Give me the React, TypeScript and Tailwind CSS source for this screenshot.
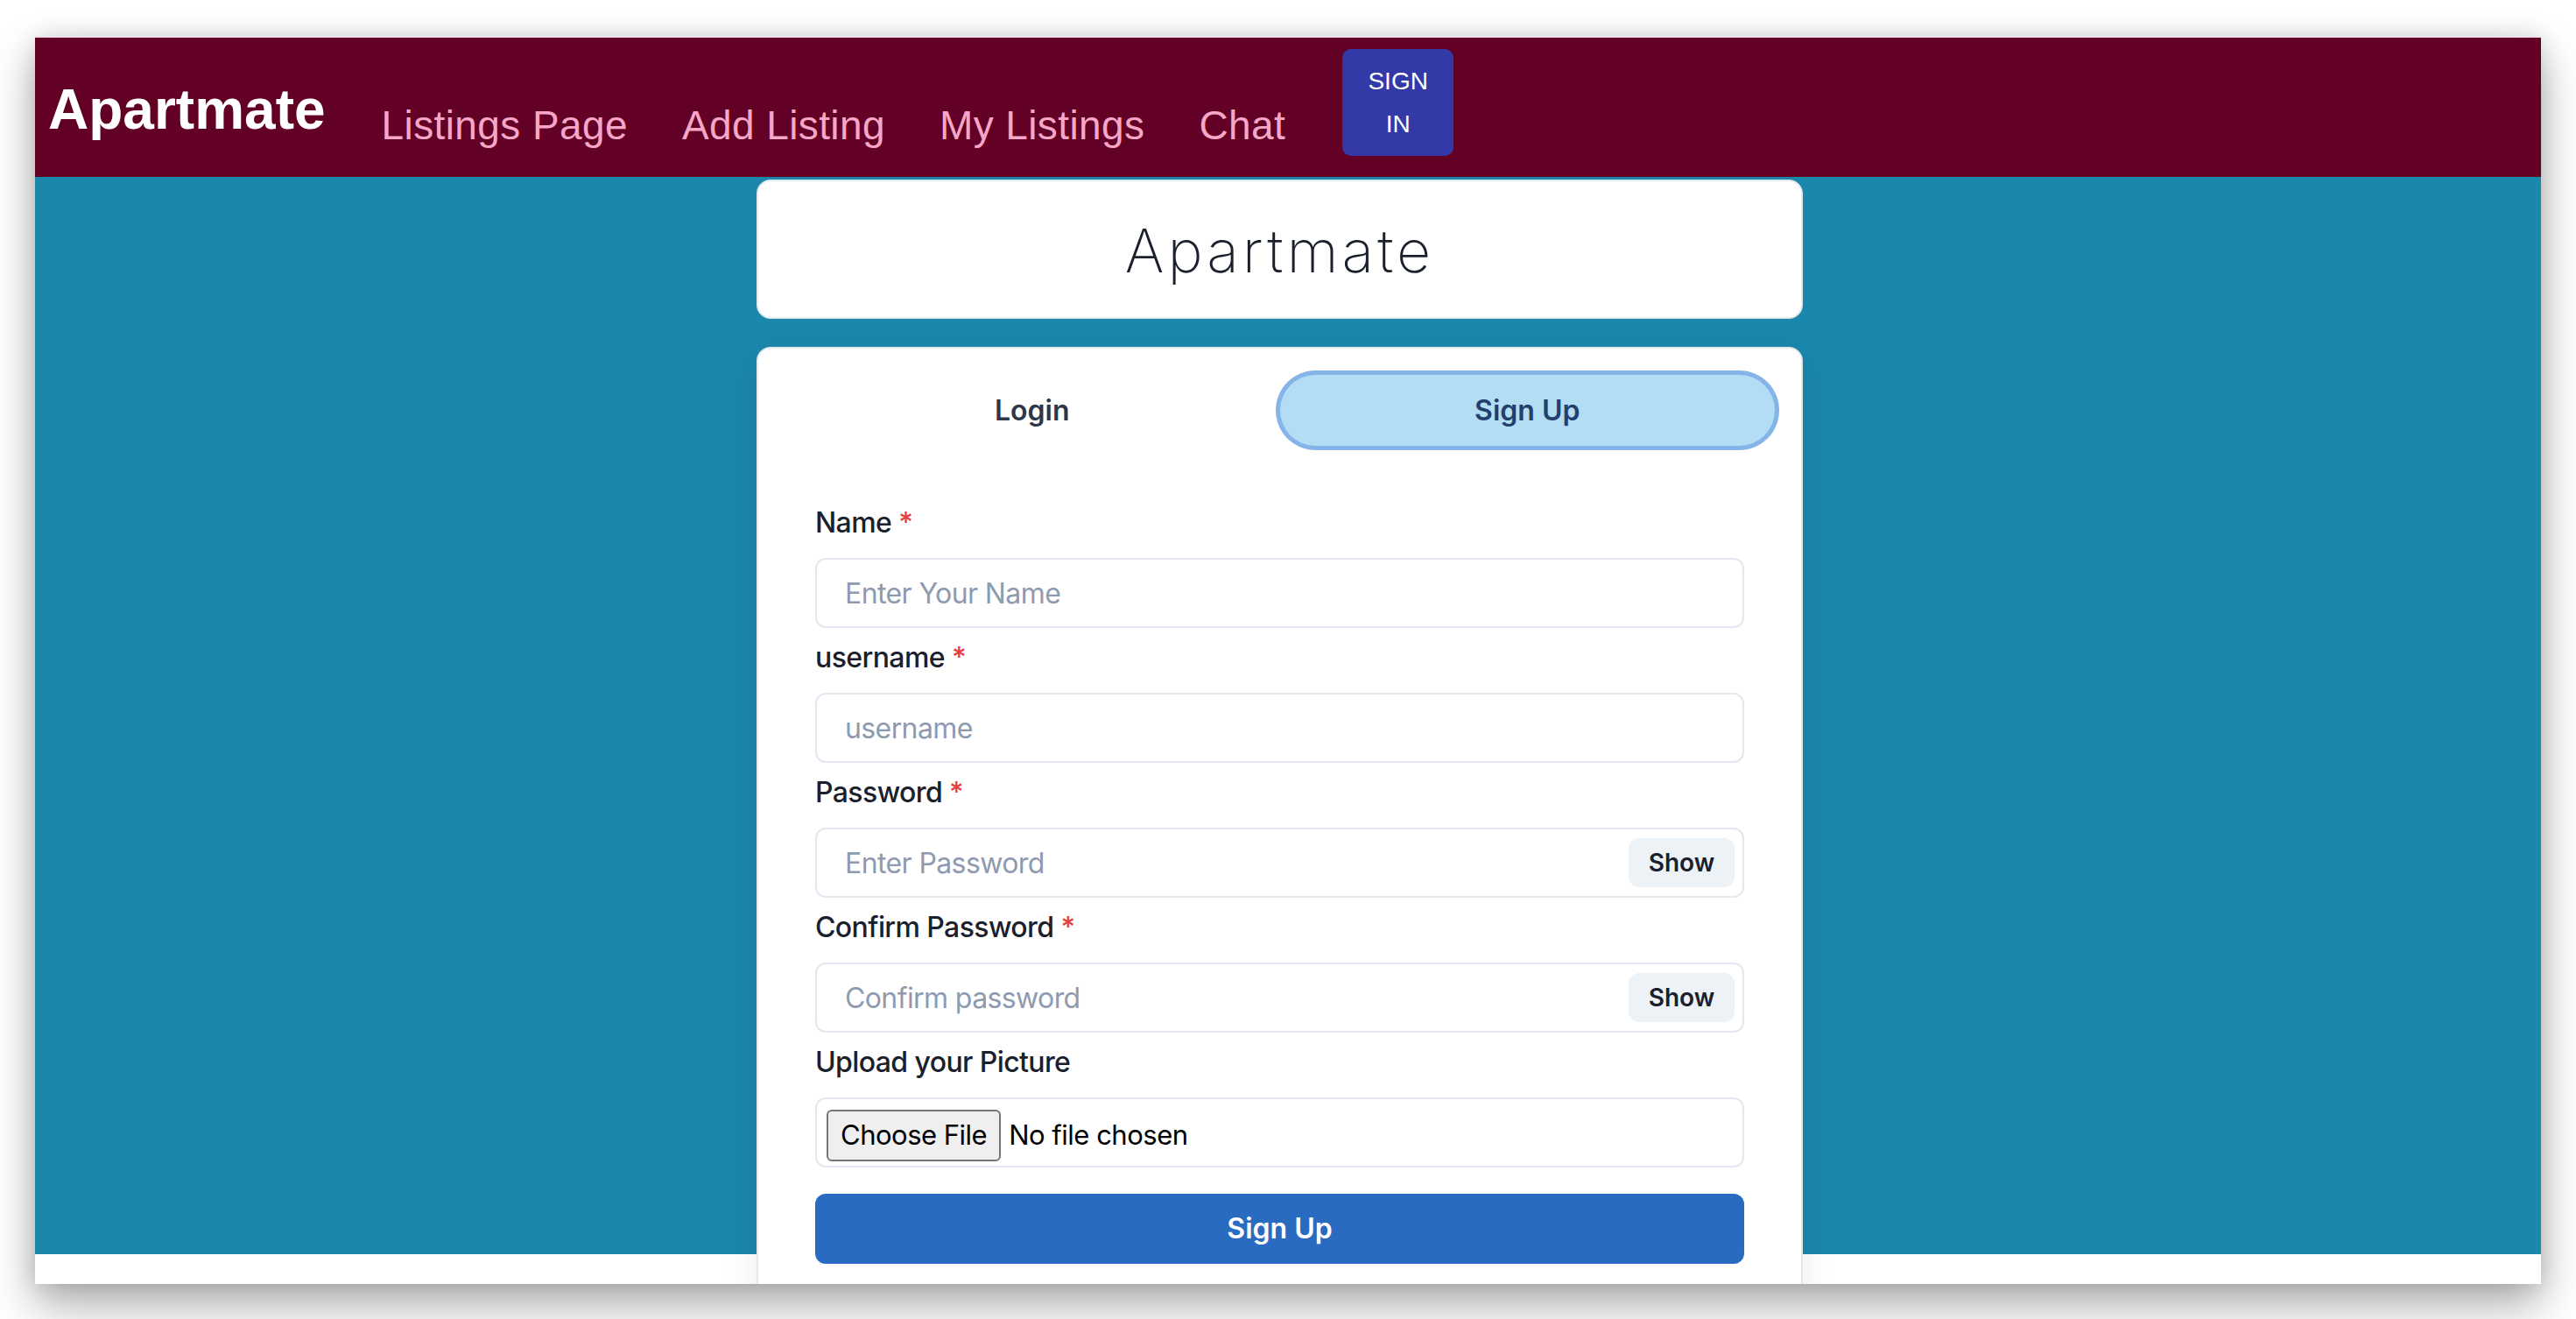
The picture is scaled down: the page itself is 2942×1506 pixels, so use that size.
import React from "react";

const navLinks = ["Listings Page", "Add Listing", "My Listings", "Chat"];

function Label({ text, required }: { text: string; required?: boolean }) {
  return (
    <label className="mb-[16px] block h-[48px] text-[32px] font-medium leading-[48px] tracking-[-0.6px] text-[#1a202c]">
      {text}
      {required && <span className="ml-[8px] text-[#e53e3e]">*</span>}
    </label>
  );
}

function TextField({ label, placeholder }: { label: string; placeholder: string }) {
  return (
    <div className="flex flex-col">
      <Label text={label} required />
      <input
        placeholder={placeholder}
        className="h-[80px] w-full rounded-[12px] border-2 border-[#e2e8f0] bg-white px-[32px] text-[32px] tracking-[-0.6px] text-[#1a202c] outline-none placeholder:text-[#8e9ab0]"
      />
    </div>
  );
}

function PasswordField({ label, placeholder }: { label: string; placeholder: string }) {
  return (
    <div className="flex flex-col">
      <Label text={label} required />
      <div className="flex h-[80px] items-center rounded-[12px] border-2 border-[#e2e8f0] bg-white">
        <input
          type="password"
          placeholder={placeholder}
          className="h-full min-w-0 flex-1 rounded-[12px] bg-transparent pl-[32px] text-[32px] tracking-[-0.6px] text-[#1a202c] outline-none placeholder:text-[#8e9ab0]"
        />
        <button className="mr-[9px] h-[56px] w-[121px] rounded-[12px] bg-[#edf2f7] text-[28px] font-semibold text-[#1a202c]">
          Show
        </button>
      </div>
    </div>
  );
}

export default function App() {
  return (
    <div className="h-[1506px] w-[2942px] overflow-hidden bg-white px-[40px] pb-[40px] pt-[41px] font-['Inter',sans-serif]">
      <div className="h-[1425px] overflow-hidden border-t-2 border-[#ede2e5] bg-white shadow-[0_24px_48px_rgba(0,0,0,0.32),0_0_24px_rgba(0,0,0,0.12)]">
        {/* navbar */}
        <nav className="flex h-[159px] items-start bg-[#630025] pl-[15px] font-['Liberation_Sans',Arial,sans-serif]">
          <span className="mt-[50px] text-[64px] font-bold leading-none text-white">Apartmate</span>
          <div className="ml-[64px] mt-[77px] flex gap-[62px]">
            {navLinks.map((l) => (
              <a key={l} className="text-[46px] leading-none tracking-[0.4px] text-[#f6a7c8]">
                {l}
              </a>
            ))}
          </div>
          <button className="ml-[65px] mt-[13px] w-[127px] rounded-[10px] bg-[#3439a8] py-[12px] text-[28px] leading-[49px] text-white">
            SIGN
            <br />
            IN
          </button>
        </nav>

        {/* main */}
        <main className="flex h-[1230px] flex-col items-center bg-[#1a87ab] pr-[19px] pt-[3px]">
          <div className="flex h-[159px] w-[1195px] shrink-0 items-center justify-center rounded-[16px] border-2 border-[#e2e8f0] bg-white">
            <h1 className="mt-[2px] text-[68px] font-extralight leading-none tracking-[4px] text-[#1a202c]">Apartmate</h1>
          </div>

          <div className="mt-[32px] w-[1195px] shrink-0 rounded-[16px] border-2 border-[#e2e8f0] bg-white px-[30px] pb-[60px] pt-[30px] shadow-[0_10px_40px_rgba(0,0,0,0.08)]">
            <div className="flex">
              <button className="h-[81px] flex-1 rounded-full text-[32px] font-semibold text-[#2d3748]">Login</button>
              <button className="h-[81px] flex-1 rounded-full bg-[#b3dcf5] text-[32px] font-semibold text-[#22406c] shadow-[0_0_0_5px_#85b5e8]">
                Sign Up
              </button>
            </div>

            <form className="mt-[64px] flex flex-col gap-[10px] px-[35px]">
              <TextField label="Name" placeholder="Enter Your Name" />
              <TextField label="username" placeholder="username" />
              <PasswordField label="Password" placeholder="Enter Password" />
              <PasswordField label="Confirm Password" placeholder="Confirm password" />
              <div className="flex flex-col">
                <Label text="Upload your Picture" />
                <div className="flex h-[80px] items-start rounded-[12px] border-2 border-[#e2e8f0] bg-white pl-[11px] pt-[12px] text-[31px] tracking-[-0.5px]">
                  <span className="flex h-[59px] items-center rounded-[6px] border-2 border-[#767676] bg-[#efefef] px-[14px] text-black">
                    Choose File
                  </span>
                  <span className="ml-[9px] flex h-[59px] items-center text-black">No file chosen</span>
                </div>
              </div>
              <button
                type="button"
                className="mt-[20px] h-[80px] w-full rounded-[12px] bg-[#296bc1] text-[32px] font-semibold text-white"
              >
                Sign Up
              </button>
            </form>
          </div>
        </main>
      </div>
    </div>
  );
}
